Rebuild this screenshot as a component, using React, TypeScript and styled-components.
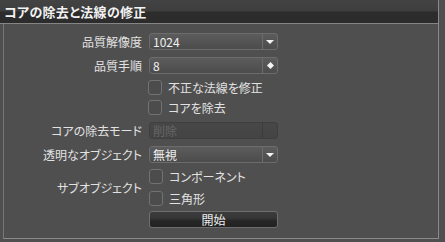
import styled, { createGlobalStyle } from "styled-components";

const GlobalStyle = createGlobalStyle`
  html, body {
    margin: 0;
    padding: 0;
    background: #4f4f4f;
  }
  body {
    font-family: "Noto Sans CJK JP", "Noto Sans", sans-serif;
    font-feature-settings: "palt";
  }
`;

const App = () => {
  return (
    <>
      <GlobalStyle />
      <Panel>
        <Header>コアの除去と法線の修正</Header>
        <Body>
          <Row>
            <Label>品質解像度</Label>
            <Select>
              <SelectText>1024</SelectText>
              <ArrowBox>
                <Arrow />
              </ArrowBox>
            </Select>
          </Row>

          <Row $mt={7}>
            <Label>品質手順</Label>
            <Select>
              <SelectText>8</SelectText>
              <ArrowBox>
                <Diamond />
              </ArrowBox>
            </Select>
          </Row>

          <CheckRow $mt={3}>
            <Spacer />
            <Check />
            <CheckText>不正な法線を修正</CheckText>
          </CheckRow>
          <CheckRow>
            <Spacer />
            <Check />
            <CheckText>コアを除去</CheckText>
          </CheckRow>

          <Row $mt={5}>
            <Label>コアの除去モード</Label>
            <Select $disabled>
              <SelectText $disabled>削除</SelectText>
              <ArrowBox $disabled />
            </Select>
          </Row>

          <Row $mt={7}>
            <Label>透明なオブジェクト</Label>
            <Select>
              <SelectText>無視</SelectText>
              <ArrowBox>
                <Arrow />
              </ArrowBox>
            </Select>
          </Row>

          <SubGroup>
            <Label>サブオブジェクト</Label>
            <SubList>
              <CheckRow $h={22}>
                <Check />
                <CheckText>コンポーネント</CheckText>
              </CheckRow>
              <CheckRow $h={22}>
                <Check />
                <CheckText>三角形</CheckText>
              </CheckRow>
            </SubList>
          </SubGroup>

          <Row $mt={2}>
            <Spacer />
            <StartButton>開始</StartButton>
          </Row>
        </Body>
      </Panel>
    </>
  );
};

export default App;

const Panel = styled.div`
  width: 438px;
  height: 239px;
  display: flex;
  flex-direction: column;
  border-right: 1px solid #8a8a8a;
`;

const Header = styled.div`
  height: 23px;
  padding-left: 4px;
  display: flex;
  align-items: center;
  background: linear-gradient(to bottom, #434343 0, #3e3e3e 11px, #2c2c2c 12px, #2c2c2c 100%);
  border-bottom: 1px solid #858585;
  color: #f2f2f2;
  font-size: 13px;
  font-weight: 700;
  letter-spacing: 0.3px;
`;

const Body = styled.div`
  flex: 1;
  margin-left: 3px;
  padding-top: 9px;
  border-left: 1px solid #767676;
  border-bottom: 1px solid #8a8a8a;
  display: flex;
  flex-direction: column;
`;

const Row = styled.div<{ $mt?: number }>`
  height: 17px;
  margin-top: ${(p) => p.$mt ?? 0}px;
  display: flex;
  align-items: center;
  gap: 7px;
`;

const Label = styled.div`
  width: 138px;
  flex-shrink: 0;
  text-align: right;
  color: #e2e2e2;
  font-size: 12px;
  white-space: nowrap;
`;

const Spacer = styled.div`
  width: 138px;
  flex-shrink: 0;
`;

const Select = styled.div<{ $disabled?: boolean }>`
  box-sizing: border-box;
  width: 129px;
  height: 17px;
  display: flex;
  align-items: stretch;
  border: 1px solid ${(p) => (p.$disabled ? "#3f3f3f" : "#6c6c6c")};
  border-radius: 3px;
  background: ${(p) =>
    p.$disabled
      ? "linear-gradient(to bottom, #474747, #444444)"
      : "linear-gradient(to bottom, #5c5c5c, #4c4c4c)"};
`;

const SelectText = styled.div<{ $disabled?: boolean }>`
  flex: 1;
  padding-left: 3px;
  display: flex;
  align-items: center;
  color: ${(p) => (p.$disabled ? "#666666" : "#f0f0f0")};
  font-size: 12px;
`;

const ArrowBox = styled.div<{ $disabled?: boolean }>`
  width: 14px;
  display: flex;
  align-items: center;
  justify-content: center;
  border-left: 1px solid ${(p) => (p.$disabled ? "#3c3c3c" : "#6c6c6c")};
`;

const Arrow = styled.div`
  width: 0;
  height: 0;
  border-left: 4px solid transparent;
  border-right: 4px solid transparent;
  border-top: 4px solid #f4f4f4;
  margin-top: 1px;
`;

const Diamond = styled.div`
  width: 5px;
  height: 5px;
  background: #f4f4f4;
  transform: rotate(45deg);
`;

const CheckRow = styled.div<{ $mt?: number; $h?: number }>`
  height: ${(p) => p.$h ?? 20}px;
  margin-top: ${(p) => p.$mt ?? 0}px;
  display: flex;
  align-items: center;
  gap: 7px;
`;

const Check = styled.div`
  box-sizing: border-box;
  width: 14px;
  height: 15px;
  margin-left: -1px;
  border: 1px solid #727272;
  border-radius: 3px;
  background: #4c4c4c;
  flex-shrink: 0;
`;

const CheckText = styled.span`
  margin-left: -1px;
  color: #e2e2e2;
  font-size: 12px;
  white-space: nowrap;
`;

const SubGroup = styled.div`
  margin-top: 2px;
  display: flex;
  align-items: center;
  gap: 8px;
`;

const SubList = styled.div`
  display: flex;
  flex-direction: column;
`;

const StartButton = styled.div`
  box-sizing: border-box;
  width: 129px;
  height: 17px;
  display: flex;
  align-items: center;
  justify-content: center;
  border: 1px solid #6e6e6e;
  border-radius: 3px;
  background: linear-gradient(to bottom, #3c3c3c 0, #363636 40%, #262626 60%, #222222 100%);
  color: #f0f0f0;
  font-size: 12px;
`;
